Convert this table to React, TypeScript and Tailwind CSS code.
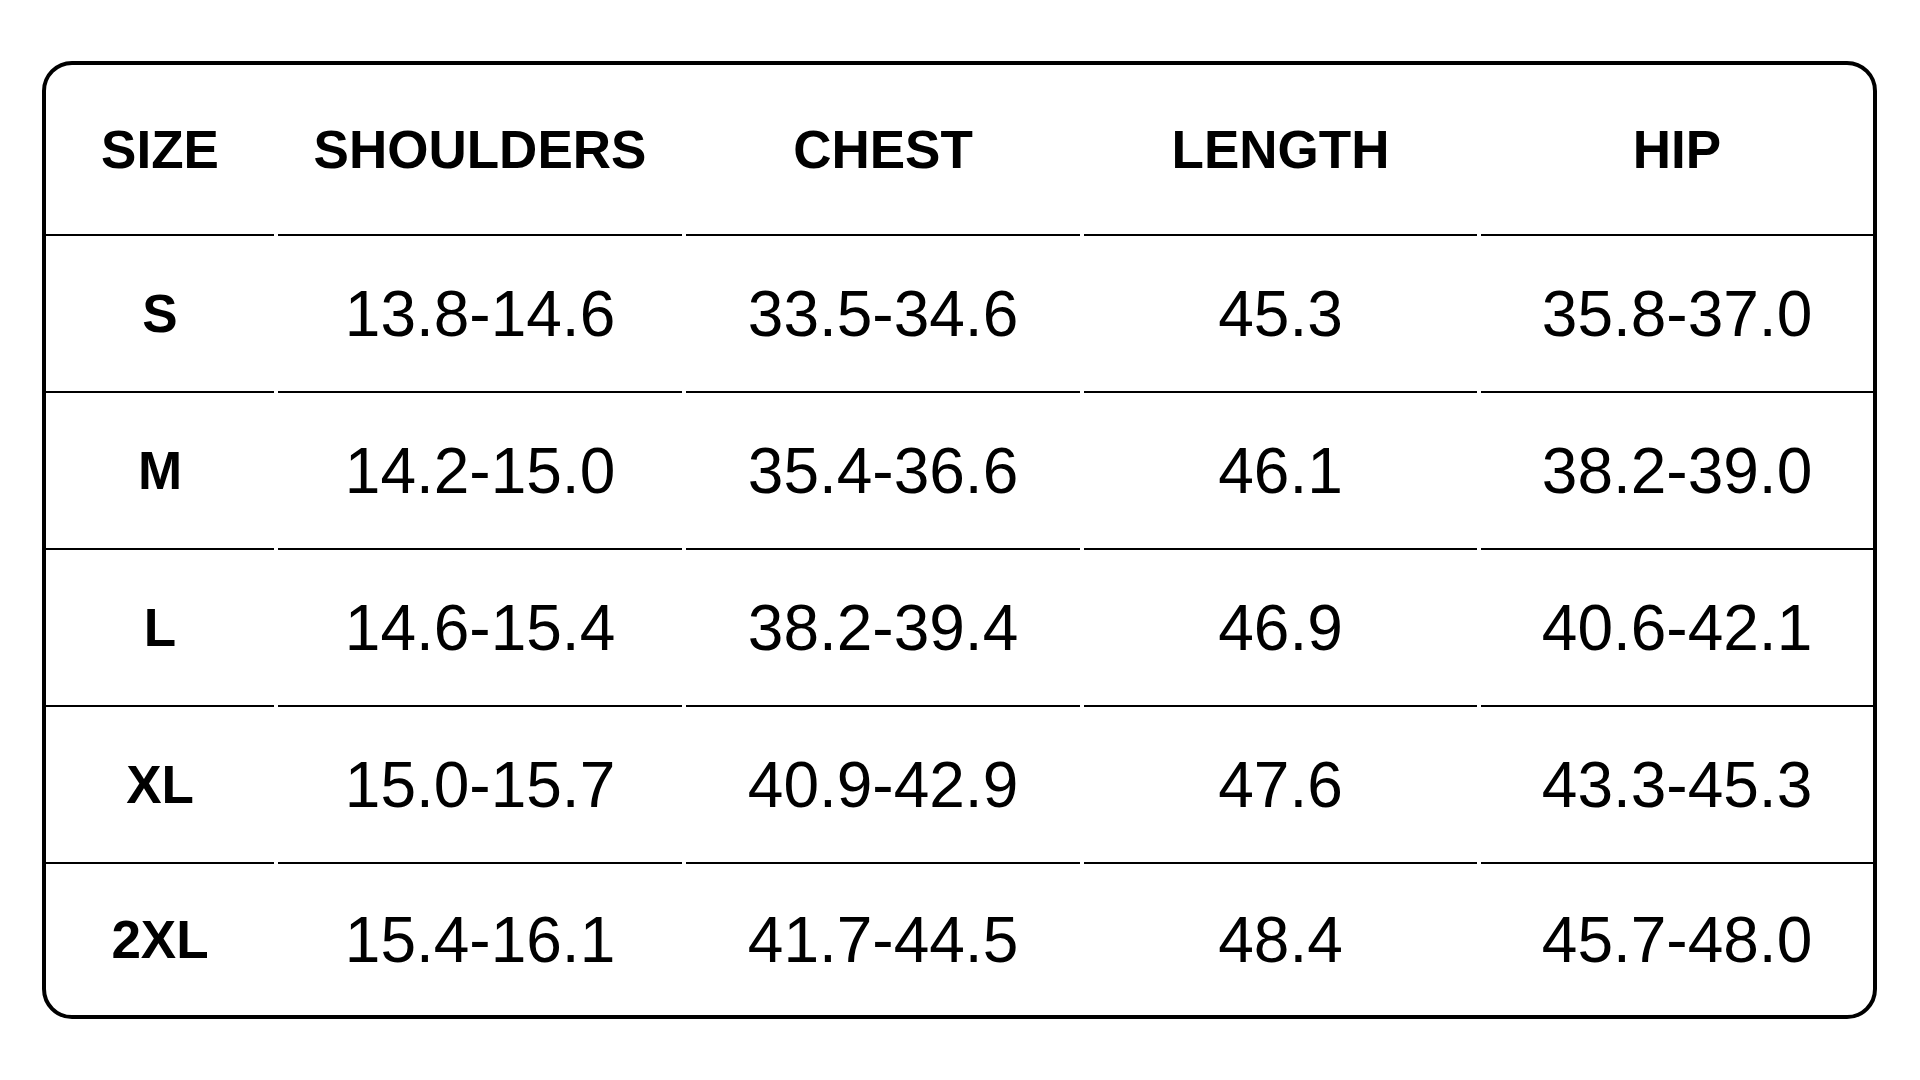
import React from "react";

const headers = ["SIZE", "SHOULDERS", "CHEST", "LENGTH", "HIP"];
const rows: string[][] = [
  ["S", "13.8-14.6", "33.5-34.6", "45.3", "35.8-37.0"],
  ["M", "14.2-15.0", "35.4-36.6", "46.1", "38.2-39.0"],
  ["L", "14.6-15.4", "38.2-39.4", "46.9", "40.6-42.1"],
  ["XL", "15.0-15.7", "40.9-42.9", "47.6", "43.3-45.3"],
  ["2XL", "15.4-16.1", "41.7-44.5", "48.4", "45.7-48.0"],
];

export default function App() {
  return (
    <div className="w-[1920px] h-[1080px] bg-white overflow-hidden font-['Liberation_Sans',Arial,sans-serif] text-black">
      <div className="ml-[42px] mt-[61px] w-[1835px] h-[958px] border-[4px] border-black rounded-[30px] overflow-hidden">
        <div className="grid grid-cols-[228px_404px_394px_393px_392px] gap-x-[4px]">
          {headers.map((h) => (
            <div
              key={h}
              className="h-[171px] border-b-2 border-black flex items-center justify-center whitespace-nowrap text-[53px] font-bold leading-none"
            >
              {h}
            </div>
          ))}
          {rows.map((r, ri) =>
            r.map((c, ci) => (
              <div
                key={ri + "-" + ci}
                className={
                  ri === rows.length - 1
                    ? ci === 0
                      ? "h-[151px] flex items-center justify-center whitespace-nowrap text-[53px] font-bold leading-none"
                      : "h-[151px] flex items-center justify-center whitespace-nowrap text-[64px] leading-none"
                    : ci === 0
                    ? "h-[157px] border-b-2 border-black flex items-center justify-center whitespace-nowrap text-[53px] font-bold leading-none"
                    : "h-[157px] border-b-2 border-black flex items-center justify-center whitespace-nowrap text-[64px] leading-none"
                }
              >
                {c}
              </div>
            ))
          )}
        </div>
      </div>
    </div>
  );
}
